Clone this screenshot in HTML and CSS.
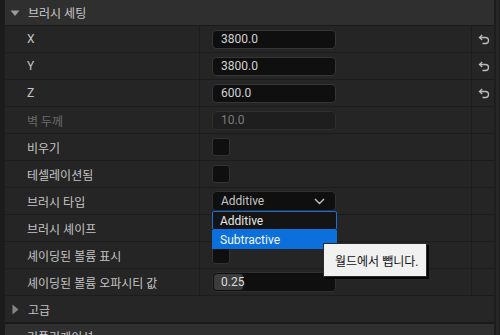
FILE: index.html
```html
<!DOCTYPE html>
<html lang="ko">
<head>
<meta charset="utf-8">
<link rel="stylesheet" href="styles.css">
</head>
<body>
<div class="frame">
  <div class="panel">
    <div class="topline"><span class="c1"></span><span class="c2"></span><span class="c3"></span></div>
    <div class="cat">
      <svg class="tri" width="10" height="7" viewBox="0 0 10 7"><path d="M0.5 0.5 H9.5 L5 6 Z" fill="#9a9a9a"/></svg>
      <span>브러시 세팅</span>
    </div>
    <div class="row">
      <div class="label">X</div>
      <div class="value"><div class="input">3800.0</div></div>
      <div class="reset"><svg width="13" height="11" viewBox="0 0 13 11"><path d="M3 3.5 H8.5 A3 3 0 0 1 8.5 9.5 H5.5" fill="none" stroke="#bdbdbd" stroke-width="1.3"/><path d="M5.2 1 L2.5 3.5 L5.2 6" fill="none" stroke="#bdbdbd" stroke-width="1.3"/></svg></div>
    </div>
    <div class="row">
      <div class="label">Y</div>
      <div class="value"><div class="input">3800.0</div></div>
      <div class="reset"><svg width="13" height="11" viewBox="0 0 13 11"><path d="M3 3.5 H8.5 A3 3 0 0 1 8.5 9.5 H5.5" fill="none" stroke="#bdbdbd" stroke-width="1.3"/><path d="M5.2 1 L2.5 3.5 L5.2 6" fill="none" stroke="#bdbdbd" stroke-width="1.3"/></svg></div>
    </div>
    <div class="row">
      <div class="label">Z</div>
      <div class="value"><div class="input">600.0</div></div>
      <div class="reset"><svg width="13" height="11" viewBox="0 0 13 11"><path d="M3 3.5 H8.5 A3 3 0 0 1 8.5 9.5 H5.5" fill="none" stroke="#bdbdbd" stroke-width="1.3"/><path d="M5.2 1 L2.5 3.5 L5.2 6" fill="none" stroke="#bdbdbd" stroke-width="1.3"/></svg></div>
    </div>
    <div class="row">
      <div class="label disabled">벽 두께</div>
      <div class="value"><div class="input input-disabled">10.0</div></div>
      <div class="reset"></div>
    </div>
    <div class="row">
      <div class="label">비우기</div>
      <div class="value"><div class="check"></div></div>
      <div class="reset"></div>
    </div>
    <div class="row">
      <div class="label">테셀레이션됨</div>
      <div class="value"><div class="check"></div></div>
      <div class="reset"></div>
    </div>
    <div class="row">
      <div class="label">브러시 타입</div>
      <div class="value anchor">
        <div class="combo"><span>Additive</span>
          <svg width="11" height="7" viewBox="0 0 11 7"><path d="M1 1 L5.5 5.5 L10 1" fill="none" stroke="#c4c4c4" stroke-width="1.4"/></svg>
        </div>
        <div class="menu">
          <div class="opt opt-focus">Additive</div>
          <div class="opt opt-sel">Subtractive</div>
        </div>
        <div class="tooltip">월드에서 뺍니다.</div>
      </div>
      <div class="reset"></div>
    </div>
    <div class="row">
      <div class="label">브러시 셰이프</div>
      <div class="value"></div>
      <div class="reset"></div>
    </div>
    <div class="row">
      <div class="label">셰이딩된 볼륨 표시</div>
      <div class="value"><div class="check"></div></div>
      <div class="reset"></div>
    </div>
    <div class="row">
      <div class="label">셰이딩된 볼륨 오파시티 값</div>
      <div class="value"><div class="slider"><div class="fill"></div><span class="sval">0.25</span></div></div>
      <div class="reset"></div>
    </div>
    <div class="subcat">
      <svg class="tri2" width="7" height="11" viewBox="0 0 7 11"><path d="M0.5 0.5 V10.5 L6.5 5.5 Z" fill="#858585"/></svg>
      <span>고급</span>
    </div>
    <div class="cat cat-next">
      <span>리플리케이션</span>
    </div>
  </div>
  <div class="scroll"><div class="thumb"></div></div>
</div>
</body>
</html>
```
FILE: styles.css
```css
html, body {
  margin: 0;
  padding: 0;
  background: #1b1b1b;
}
body {
  width: 500px;
  height: 335px;
  overflow: hidden;
  font-family: Roboto, "Noto Sans CJK KR", sans-serif;
  font-size: 12px;
  color: #c4c4c4;
}
.frame {
  display: flex;
  height: 335px;
  padding-left: 5px;
}
.panel {
  width: 489px;
  display: flex;
  flex-direction: column;
}
.topline {
  height: 2px;
  display: grid;
  grid-template-columns: 195px 272px 22px;
  background: #242424;
}
.topline .c1, .topline .c2 { border-right: 1px solid #1a1a1a; }
.cat {
  height: 25px;
  flex: none;
  border-top: 0;
  border-bottom: 1px solid #1a1a1a;
  background: #2f2f2f;
  display: flex;
  align-items: center;
  padding-left: 5px;
  color: #c8c8c8;
}
.cat .tri { margin-right: 8px; margin-top: 1px; }
.cat-next { padding-left: 22px; border-top: 1px solid #1a1a1a; }
.row {
  height: 26px;
  flex: none;
  border-bottom: 1px solid #1c1c1c;
  background: #252525;
  display: grid;
  grid-template-columns: 195px 272px 22px;
}
.label {
  border-right: 1px solid #1c1c1c;
  display: flex;
  align-items: center;
  padding-left: 22px;
  color: #c4c4c4;
  white-space: nowrap;
}
.label.disabled { color: #6a6a6a; }
.value {
  border-right: 1px solid #1c1c1c;
  display: flex;
  align-items: center;
  padding-left: 12px;
}
.anchor { position: relative; }
.reset {
  display: flex;
  align-items: center;
  justify-content: center;
  padding-left: 1px;
}
.input {
  box-sizing: border-box;
  width: 124px;
  height: 19px;
  border: 1px solid #363636;
  border-radius: 4px;
  background: #0f0f0f;
  color: #d2d2d2;
  padding-left: 8px;
  display: flex;
  align-items: center;
}
.input-disabled {
  background: #1e1e1e;
  border-color: #2e2e2e;
  color: #7c7c7c;
}
.check {
  box-sizing: border-box;
  width: 18px;
  height: 18px;
  border: 1px solid #333;
  border-radius: 3px;
  background: #0f0f0f;
}
.combo {
  box-sizing: border-box;
  width: 124px;
  height: 20px;
  border: 1px solid #303030;
  border-radius: 4px;
  background: #0f0f0f;
  color: #c4c4c4;
  padding: 0 10px 0 8px;
  display: flex;
  align-items: center;
  justify-content: space-between;
}
.menu {
  position: absolute;
  left: 12px;
  top: 23px;
  width: 125px;
  display: flex;
  flex-direction: column;
}
.opt {
  box-sizing: border-box;
  height: 19px;
  display: flex;
  align-items: center;
  padding-left: 8px;
  color: #e8e8e8;
}
.opt-focus {
  background: #141414;
  border: 1px solid #1a6fd6;
  border-radius: 2px;
  padding-left: 7px;
}
.opt-sel {
  background: #0b70dc;
  color: #f2f6fc;
}
.tooltip {
  position: absolute;
  left: 123px;
  top: 55px;
  box-sizing: border-box;
  width: 104px;
  height: 34px;
  background: #f1f1f1;
  border: 1px solid #2a2a2a;
  box-shadow: 2px 2px 0 #050505;
  color: #111;
  display: flex;
  align-items: center;
  padding-left: 11px;
  z-index: 3;
}
.slider {
  box-sizing: border-box;
  width: 124px;
  height: 20px;
  border: 1px solid #303030;
  border-radius: 4px;
  background: #0f0f0f;
  position: relative;
  display: flex;
  align-items: center;
}
.fill {
  position: absolute;
  left: 1px;
  top: 1px;
  bottom: 1px;
  width: 29px;
  background: #3c3c3c;
  border-radius: 3px;
}
.sval {
  position: relative;
  padding-left: 8px;
  color: #dcdcdc;
}
.subcat {
  height: 26px;
  flex: none;
  border-bottom: 1px solid #1a1a1a;
  background: #262626;
  display: flex;
  align-items: center;
  padding-left: 7px;
  color: #c4c4c4;
}
.subcat .tri2 { margin-right: 9px; }
.scroll {
  width: 6px;
  background: #1d1d1d;
  display: flex;
  justify-content: center;
}
.thumb {
  width: 3px;
  height: 335px;
  background: #262626;
}
```
